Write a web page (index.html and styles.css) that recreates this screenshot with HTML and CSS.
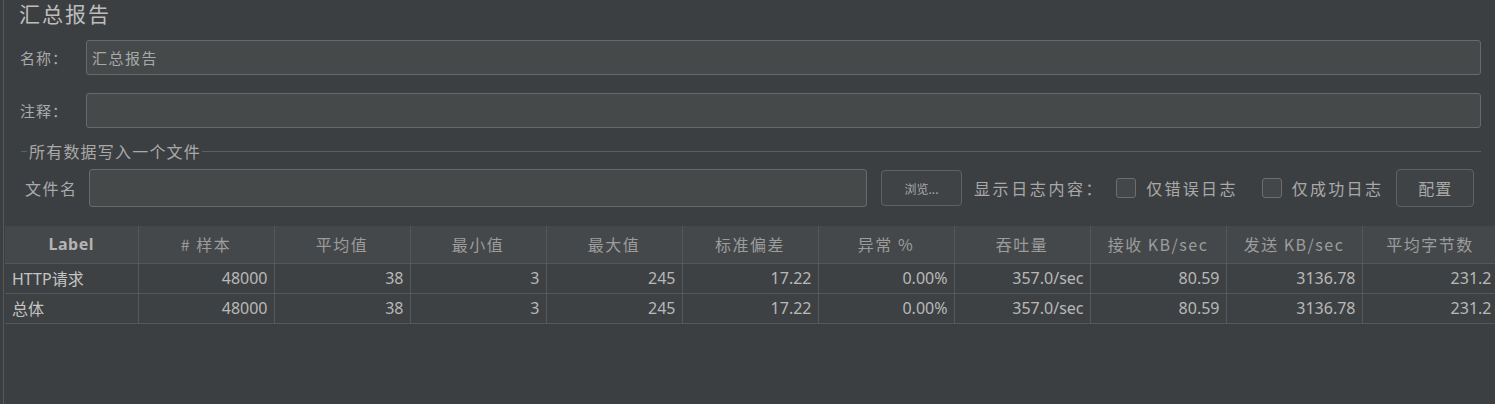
FILE: index.html
```html
<!DOCTYPE html>
<html lang="zh">
<head>
<meta charset="utf-8">
<link rel="stylesheet" href="styles.css">
</head>
<body>
<div class="frame">
  <div class="title">汇总报告</div>
  <div class="form-row row-name">
    <span class="label">名称：</span>
    <div class="input">汇总报告</div>
  </div>
  <div class="form-row row-comment">
    <span class="label">注释：</span>
    <div class="input"></div>
  </div>
  <div class="fieldset">
    <div class="legend"><span class="legend-dash"></span><span class="legend-text">所有数据写入一个文件</span><span class="legend-line"></span></div>
    <div class="file-row">
      <span class="file-label">文件名</span>
      <div class="input file-input"></div>
      <button class="btn btn-small">浏览...</button>
      <span class="log-label">显示日志内容：</span>
      <span class="check"><span class="box"></span>仅错误日志</span>
      <span class="check"><span class="box"></span>仅成功日志</span>
      <button class="btn btn-config">配置</button>
    </div>
  </div>
  <table class="grid">
    <colgroup>
      <col class="c-first"><col><col><col><col><col><col><col><col><col><col>
    </colgroup>
    <thead>
      <tr>
        <th class="bold">Label</th><th># 样本</th><th>平均值</th><th>最小值</th><th>最大值</th><th>标准偏差</th><th>异常 %</th><th>吞吐量</th><th>接收 KB/sec</th><th>发送 KB/sec</th><th>平均字节数</th>
      </tr>
    </thead>
    <tbody>
      <tr>
        <td class="lbl">HTTP请求</td><td>48000</td><td>38</td><td>3</td><td>245</td><td>17.22</td><td>0.00%</td><td>357.0/sec</td><td>80.59</td><td>3136.78</td><td>231.2</td>
      </tr>
      <tr>
        <td class="lbl">总体</td><td>48000</td><td>38</td><td>3</td><td>245</td><td>17.22</td><td>0.00%</td><td>357.0/sec</td><td>80.59</td><td>3136.78</td><td>231.2</td>
      </tr>
    </tbody>
  </table>
</div>
</body>
</html>
```
FILE: styles.css
```css
* { box-sizing: border-box; }
html, body {
  margin: 0;
  padding: 0;
  background: #3c3f41;
  width: 1495px;
  height: 404px;
  overflow: hidden;
}
body {
  font-family: "Noto Sans", "Noto Sans CJK SC", sans-serif;
  color: #bbbbbb;
  font-size: 16px;
}
.frame {
  margin-left: 3px;
  border-left: 1px solid #56595b;
  height: 404px;
  padding-right: 14px;
}
.title {
  font-family: "Noto Sans CJK SC", sans-serif;
  font-size: 21px;
  letter-spacing: 2px;
  line-height: 26px;
  padding-left: 15px;
  color: #bdbdbd;
}
.form-row {
  display: flex;
  align-items: center;
  padding-left: 16px;
  height: 35px;
}
.row-name { margin-top: 14px; }
.row-comment { margin-top: 18px; }
.label {
  font-family: "Noto Sans CJK SC", sans-serif;
  width: 66px;
  font-size: 15px;
  letter-spacing: 1px;
  color: #a9a9a9;
}
.input {
  flex: 1;
  height: 35px;
  background: #45494a;
  border: 1px solid #67696b;
  border-radius: 3px;
  font-family: "Noto Sans CJK SC", sans-serif;
  font-size: 15px;
  letter-spacing: 1.5px;
  color: #a9a9a9;
  padding-left: 5px;
  display: flex;
  align-items: center;
}
.fieldset {
  margin-top: 14px;
  padding-left: 17px;
}
.legend {
  display: flex;
  align-items: center;
  height: 18px;
  font-family: "Noto Sans CJK SC", sans-serif;
  font-size: 16px;
  letter-spacing: 1.2px;
  color: #a9a9a9;
}
.legend-dash {
  width: 6px;
  border-top: 1px solid #5c5f61;
  margin-right: 2px;
}
.legend-line {
  flex: 1;
  border-top: 1px solid #5c5f61;
  margin-left: 1px;
}
.file-row {
  display: flex;
  align-items: center;
  height: 38px;
  margin-top: 9px;
  padding-left: 4px;
  font-family: "Noto Sans CJK SC", sans-serif;
  color: #a9a9a9;
}
.file-label {
  width: 64px;
  font-size: 16px;
  letter-spacing: 1.5px;
}
.file-input {
  flex: 0 0 778px;
  height: 38px;
}
.btn {
  font-family: "Noto Sans CJK SC", sans-serif;
  background: #3f4345;
  border: 1px solid #5f6264;
  border-radius: 4px;
  color: #a9a9a9;
  height: 36px;
  padding: 0;
  margin: 0;
}
.btn-small {
  width: 81px;
  margin-left: 14px;
  font-size: 12px;
}
.log-label {
  margin-left: 12px;
  font-size: 16px;
  letter-spacing: 2.6px;
}
.check {
  display: flex;
  align-items: center;
  font-size: 16px;
  letter-spacing: 2.3px;
  margin-left: 12px;
}
.check + .check { margin-left: 24px; }
.box {
  width: 20px;
  height: 20px;
  border: 1px solid #6b6e70;
  border-radius: 3px;
  background: #43474a;
  margin-right: 10px;
}
.btn-config {
  width: 78px;
  height: 38px;
  margin-left: 13px;
  font-size: 16px;
  letter-spacing: 1px;
}
.grid {
  margin-top: 19px;
  margin-left: 1px;
  border-collapse: collapse;
  table-layout: fixed;
  width: 1493px;
  font-size: 16px;
}
.grid col { width: 136px; }
.grid col.c-first { width: 133px; }
.grid th {
  height: 37px;
  background: #45484a;
  border: 1px solid #55585a;
  border-top: none;
  font-family: "Noto Sans CJK SC", sans-serif;
  font-weight: normal;
  color: #9c9c9c;
  letter-spacing: 1.5px;
  text-align: center;
  padding: 0;
}
.grid th.bold {
  font-family: "Noto Sans", sans-serif;
  font-weight: bold;
  letter-spacing: 0.5px;
  color: #b4b4b4;
}
.grid td {
  height: 30px;
  background: #3e4143;
  border: 1px solid #55585a;
  text-align: right;
  padding: 0 6px 0 0;
  color: #b8b8b8;
  white-space: nowrap;
  overflow: hidden;
}
.grid td.lbl {
  text-align: left;
  padding-left: 7px;
  font-family: "Noto Sans", "Noto Sans CJK SC", sans-serif;
  color: #c4c4c4;
}
.grid tr td:first-child, .grid tr th:first-child { border-left: none; }
```
